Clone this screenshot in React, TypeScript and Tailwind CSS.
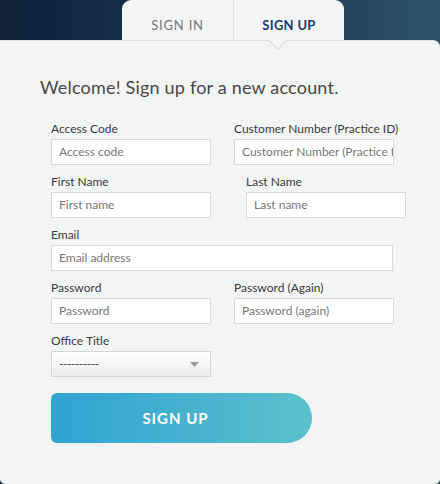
import React from 'react'

const font = { fontFamily: '"Lato", "Open Sans", sans-serif' }

function Field({ label, placeholder, className = '' }: { label: string; placeholder: string; className?: string }) {
  return (
    <div className={`flex flex-col ${className}`}>
      <label className="h-[16px] text-[12px] leading-[16px] text-[#3a3a3a]">{label}</label>
      <div className="mt-[2px] h-[26px] w-[160px] border border-[#d9d9d9] bg-white flex items-center pl-[7px] overflow-hidden whitespace-nowrap text-[12px] text-[#777]">
        {placeholder}
      </div>
    </div>
  )
}

export default function App() {
  return (
    <div
      className="w-[440px] h-[484px] flex flex-col bg-[linear-gradient(90deg,#0e2137_0%,#1c3a52_55%,#2d5266_100%)] overflow-hidden"
      style={font}
    >
      {/* tabs */}
      <div className="ml-[122px] w-[222px] h-[40px] flex rounded-t-[9px] bg-[#f4f5f5] relative z-10">
        <div className="w-[111px] flex items-center justify-center pt-[12px] text-[13px] tracking-[0.8px] text-[#777]">
          SIGN IN
        </div>
        <div className="w-px bg-[#e2e3e3]" />
        <div className="flex-1 relative flex items-center justify-center pt-[12px] text-[13px] font-bold tracking-[0.3px] text-[#1e3a6c]">
          SIGN UP
          <div className="absolute left-[37px] bottom-[-7px] w-[14px] h-[14px] rotate-45 bg-[#f4f5f5] border-r border-b border-[#d8d8d8]" />
        </div>
      </div>

      {/* panel */}
      <div className="flex-1 bg-[#f3f4f4] border-t border-[#dedfdf] rounded-tr-[7px] rounded-b-[5px] pl-[40px] pt-[34px] flex flex-col">
        <h1 className="text-[18px] leading-[24px] text-[#474747] tracking-[0.2px]">Welcome! Sign up for a new account.</h1>

        <div className="mt-[22px] ml-[11px] flex flex-col gap-[9px]">
          <div className="flex gap-[23px]">
            <Field label="Access Code" placeholder="Access code" />
            <Field label="Customer Number (Practice ID)" placeholder="Customer Number (Practice I" />
          </div>
          <div className="flex gap-[35px]">
            <Field label="First Name" placeholder="First name" />
            <Field label="Last Name" placeholder="Last name" />
          </div>
          <div className="flex flex-col">
            <label className="h-[16px] text-[12px] leading-[16px] text-[#3a3a3a]">Email</label>
            <div className="mt-[2px] h-[26px] w-[342px] border border-[#d9d9d9] bg-white flex items-center pl-[7px] text-[12px] text-[#777]">
              Email address
            </div>
          </div>
          <div className="flex gap-[23px]">
            <Field label="Password" placeholder="Password" />
            <Field label="Password (Again)" placeholder="Password (again)" />
          </div>
          <div className="flex flex-col">
            <label className="h-[16px] text-[12px] leading-[16px] text-[#3a3a3a]">Office Title</label>
            <div className="mt-[2px] h-[26px] w-[160px] border border-[#d6d6d6] bg-[linear-gradient(180deg,#ffffff,#ececec)] flex items-center justify-between pl-[7px] pr-[11px] text-[12px] text-[#444]">
              <span className="tracking-[-0.5px]">----------</span>
              <svg width="9" height="5" viewBox="0 0 9 5">
                <path d="M0 0h9L4.5 5z" fill="#9a9a9a" />
              </svg>
            </div>
          </div>
        </div>

        <div className="mt-[16px] ml-[11px] w-[261px] h-[50px] rounded-l-[6px] rounded-r-[25px] bg-[linear-gradient(90deg,#2fa3d3,#5cc0cb)] flex items-center justify-center pr-[12px] text-white text-[15px] font-bold tracking-[1px]">
          SIGN UP
        </div>
      </div>
    </div>
  )
}
